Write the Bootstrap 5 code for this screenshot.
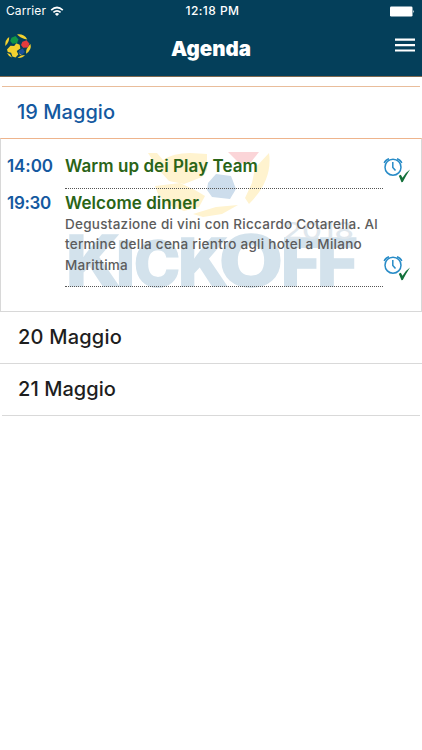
<!DOCTYPE html>
<html lang="it">
<head>
<meta charset="utf-8">
<meta name="viewport" content="width=device-width, initial-scale=1">
<title>Agenda</title>
<link rel="stylesheet" href="https://cdn.jsdelivr.net/npm/bootstrap@5.3.0/dist/css/bootstrap.min.css">
<style>
body{font-family:Inter,"Liberation Sans",sans-serif;width:422px;height:750px;overflow:hidden}
svg{display:block}
.app-head{background:#043f5a;height:77px;border-bottom:1px solid #80694f;color:#fff}
.status{height:22px;font-size:12px;line-height:22px;padding:0 7px 0 6px}
.status>div{flex:1 1 0}
.clock{margin-left:4px}
.titlebar{height:54px;padding:0 7px 0 4px}
.titlebar>div{flex:1 1 0}
.titlebar h1{font-size:20.5px;font-weight:900;line-height:24px;margin:0 0 1px 3px}
.ball{margin-top:10px}
.day{font-size:20px;font-weight:500;line-height:51px;height:52px;color:#1e1e1e;padding-left:18px;border-bottom:1px solid #d9d9d9}
.day.first{margin:9px 2px 0;padding-left:15px;border-top:1px solid #e9bd9b;border-bottom:0;color:#1459a0;height:52px;line-height:50px}
.day.final{margin:0 2px;padding-left:16px}
.panel{height:174px;border:1px solid #d8d8d8;border-top-color:#eeb48c;padding:12px 6px 0}
.water{left:0;top:0;width:420px;height:172px}
.time{width:58px;flex:none;color:#1459a0;font-weight:600;font-size:17px;line-height:30px}
.body-col{width:318px;flex:none;border-bottom:1px dotted #555}
.ev{font-size:17px;font-weight:600;line-height:30px;height:24px;color:#2a6417}
.desc{font-size:13.5px;font-weight:500;line-height:20.3px;color:#5c5c5c;padding-top:1px}
.r1{height:38px}
.r2{height:98px}
.r2 .time,.r2 .ev{line-height:28px}
.t{white-space:nowrap;display:inline-block}
</style>
</head>
<body class="bg-white">
<header class="app-head">
  <div class="status d-flex">
    <div class="d-flex align-items-center gap-1"><span class="t" data-w="40">Carrier</span>
      <svg width="14" height="11" viewBox="0 0 14 11" fill="none" stroke="#fff" stroke-width="1.7"><path d="M1.2 4.1Q7-1.1 12.8 4.1M3.4 6.4Q7 3.2 10.6 6.4"/><path d="M4.9 7.9Q7 6.1 9.1 7.9L7 10.1Z" fill="#fff" stroke="none"/></svg>
    </div>
    <span class="t fw-medium clock" data-w="54">12:18 PM</span>
    <div class="d-flex justify-content-end align-items-center"><svg width="25" height="11" viewBox="0 0 25 11" fill="#fff"><rect width="22.5" height="10" y=".5" rx="1.3"/><path d="M23.3 4Q25 5.5 23.3 7Z"/></svg></div>
  </div>
  <div class="titlebar d-flex">
    <div><svg class="ball" width="28" height="28" viewBox="0 0 28 28">
      <g fill="#f3d12f"><path d="M13 2.4Q20 1.6 23.3 7.4Q18 7 13 2.4Z"/><path d="M1.2 14Q1 7.5 5.2 5Q5.3 10.5 1.2 14Z"/><path d="M26.5 12Q28 18 22 21.7Q21.6 16.5 26.5 12Z"/><path d="M3 17.4L6.5 13.8L10.2 14L12.3 11.3L15.7 12.7L16.3 16.5L12.7 18.9L14.3 22.5L11.5 25.5L8.4 24.5L7.1 20.8L3.8 20.1Z"/><path d="M3 21L6 22L8 25.5Q4.5 24.5 3 21ZM13.5 26L17 23.5L21 23Q18.5 26.4 13.5 26ZM16 23L14.6 20.5L18 22.5Z"/></g>
      <path d="M7.5 5.8L11.5 4L14.5 7.4L13 11.3L8.5 11.8L6.2 9Z" fill="#109547"/><path d="M18.4 9.7L22.6 8.3L25.5 11.7L23.8 15.6L19.2 15.8L17 13Z" fill="#e33b3d"/><path d="M15 18.6L18.8 16.5L20.8 20L18 23L14.7 21.3Z" fill="#1d5096"/></svg></div>
    <h1 class="t align-self-center" data-w="80">Agenda</h1>
    <div class="d-flex justify-content-end align-items-center"><svg class="mb-2" width="20" height="15" viewBox="0 0 20 15"><path d="M0 1.6H20M0 7.1H20M0 12.5H20" stroke="#fff" stroke-width="2.1"/></svg></div>
  </div>
</header>
<main>
  <h2 class="day first mb-0"><span class="t" data-w="98">19 Maggio</span></h2>
  <section class="panel position-relative">
    <svg class="water position-absolute" viewBox="1 139 420 172" aria-hidden="true">
      <g fill="#fff3cf"><path d="M148 153L157 153L163 160Q173 153 190 153L207 154L207 170L202 177L184 184L169 181L159 170Z"/><path d="M155 186L180 183L195 190L205 196L199 207L184 211L166 204L158 194Z"/><path d="M269 153Q273 180 249 204L245 198L252 183L255 168Z"/><path d="M193 214L216 207L238 205L222 214L203 217Z"/></g>
      <path d="M228 152H259L251 162L240 164Z" fill="#fbd5d8"/>
      <path d="M208 183L216 174L231 176L236 189L230 199L212 197L207 190Z" fill="#cdddec"/>
      <g fill="#d3e2ec" stroke="#d3e2ec" stroke-width="1.5" font-family="Inter,sans-serif" font-weight="800">
        <g font-size="70"><text x="66" y="286" textLength="54" lengthAdjust="spacingAndGlyphs">K</text><text x="219" y="286" textLength="64" lengthAdjust="spacingAndGlyphs">O</text></g>
        <g font-size="66"><text x="281" y="286" textLength="39" lengthAdjust="spacingAndGlyphs">F</text><text x="317" y="286" textLength="41" lengthAdjust="spacingAndGlyphs">F</text></g>
        <g font-size="62"><text x="116" y="286" textLength="19" lengthAdjust="spacingAndGlyphs">I</text><text x="134" y="286" textLength="46" lengthAdjust="spacingAndGlyphs">C</text></g>
        <text font-size="66" x="178" y="286" textLength="50" lengthAdjust="spacingAndGlyphs">K</text></g>
      <text x="283" y="239" textLength="71" lengthAdjust="spacingAndGlyphs" font-family="Inter,sans-serif" font-size="23" font-weight="500" fill="#dfe7ed">2018</text>
    </svg>
    <article class="r1 d-flex position-relative">
      <div class="time"><span class="t" data-w="46">14:00</span></div>
      <div class="body-col"><div class="ev"><span class="t" data-w="193">Warm up dei Play Team</span></div></div>
      <div class="pt-1"><svg width="29" height="29" viewBox="0 0 29 29" fill="none"><g stroke="#278bc7" stroke-width="1.5"><circle cx="10" cy="12.2" r="8"/><path d="M1.2 8Q2.5 4.7 6 3.7M14 3.7Q17.5 4.7 18.8 8M9.8 7V12.5L12.5 15.6"/></g><path d="M15.8 20.7L17.8 19.8L19.5 22.7Q22.3 17.5 27 14.4Q23 20.5 19.8 27.1L18.5 27.2Z" fill="#14713b"/></svg></div>
    </article>
    <article class="r2 d-flex position-relative">
      <div class="time"><span class="t" data-w="44">19:30</span></div>
      <div class="body-col"><div class="ev"><span class="t" data-w="134">Welcome dinner</span></div>
        <div class="desc"><span class="t" data-w="313">Degustazione di vini con Riccardo Cotarella. Al</span><br><span class="t" data-w="297">termine della cena rientro agli hotel a Milano</span><br><span class="t" data-w="63">Marittima</span></div></div>
      <div class="align-self-end pb-1"><svg width="29" height="30" viewBox="0 0 29 30" fill="none"><g stroke="#278bc7" stroke-width="1.5"><circle cx="10" cy="12.2" r="8"/><path d="M1.2 8Q2.5 4.7 6 3.7M14 3.7Q17.5 4.7 18.8 8M9.8 7V12.5L12.5 15.6"/></g><path d="M15.8 20.7L17.8 19.8L19.5 22.7Q22.3 17.5 27 14.4Q23 20.5 19.8 27.1L18.5 27.2Z" fill="#14713b"/></svg></div>
    </article>
  </section>
  <h2 class="day mb-0"><span class="t" data-w="104">20 Maggio</span></h2>
  <h2 class="day final mb-0"><span class="t" data-w="98">21 Maggio</span></h2>
</main>
<script src="https://cdn.jsdelivr.net/npm/bootstrap@5.3.0/dist/js/bootstrap.bundle.min.js"></script>
<script>
// Track each label to its intended measure.
document.querySelectorAll('[data-w]').forEach(function(e){
  var n=e.textContent.length,d=(+e.dataset.w-e.getBoundingClientRect().width)/n;
  e.style.letterSpacing=d+'px';
});
</script>
</body>
</html>
